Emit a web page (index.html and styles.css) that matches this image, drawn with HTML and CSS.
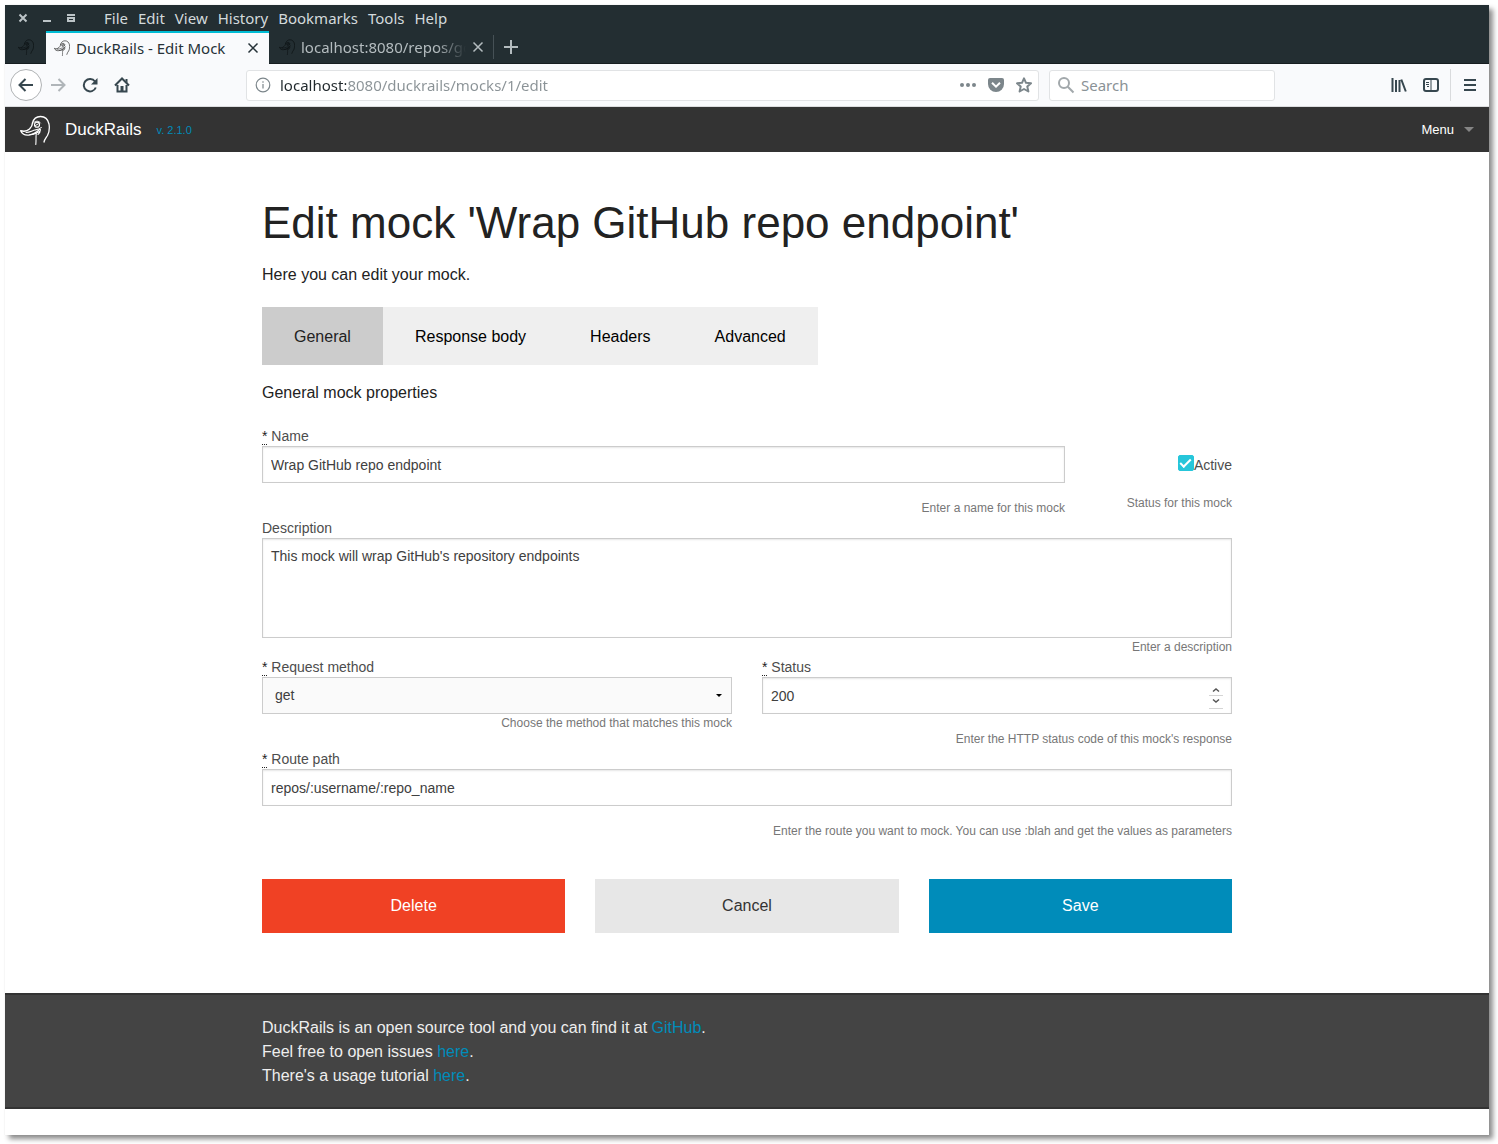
FILE: index.html
```html
<!DOCTYPE html>
<html lang="en">
<head>
<meta charset="utf-8">
<meta name="viewport" content="width=device-width, initial-scale=1">
<title>DuckRails - Edit Mock</title>
<link rel="stylesheet" href="styles.css">
</head>
<body>
<svg class="defs" aria-hidden="true">
  <symbol id="duck" viewBox="0 0 30 30">
    <g fill="none" stroke="currentColor" stroke-linecap="round" stroke-linejoin="round">
      <path stroke-width="1.3" d="M12.500 8C13.500 4 16.500 1.500 20.500 1.500C25 1.500 28 4.500 29 9C29.800 13.500 29 17.500 27.500 20.500C26 23 24.500 24.500 24 27"/>
      <path stroke-width="1.4" d="M12.500 8C12.500 10 11.500 12 9.500 14C6.500 16.800 4 16.700 .7 15.700C2 18.800 5 20.500 9 20C13.500 19.300 16.500 17.500 19.500 14.500"/>
      <path stroke-width="1.1" d="M6 17.500C10 17.500 12.500 15.500 15 15C17.500 14.600 19.500 14.500 21.300 12.500M11 19.500C14 19.500 17 18 19.500 16.500M16.300 18.500C15.700 22 16.300 25 15.800 29.500M20.500 14.500C20.300 17 19.500 18.500 18 19.500"/>
      <circle stroke-width="1.2" cx="17" cy="9.700" r="2.500"/>
      <path stroke-width="1" d="M14 7.500C16 5.500 19 5.800 20.500 8M15.500 10.500L18 9"/>
    </g>
  </symbol>
</svg>
<div class="window">
  <div class="menubar">
    <div class="window-controls">
      <button type="button" aria-label="Close window"><svg width="10" height="10" viewBox="0 0 10 10"><path d="M1.500 1.500L8.500 8.500M8.500 1.500L1.500 8.500"/></svg></button>
      <button type="button" aria-label="Minimize window"><svg width="10" height="10" viewBox="0 0 10 10"><path d="M1 8H9"/></svg></button>
      <button type="button" aria-label="Restore window"><svg width="10" height="10" viewBox="0 0 10 10"><path d="M1 2H9M2 8V5H8V8Z"/></svg></button>
    </div>
    <nav class="menus" aria-label="Application menu">
      <button type="button">File</button><button type="button">Edit</button><button type="button">View</button><button type="button">History</button><button type="button">Bookmarks</button><button type="button">Tools</button><button type="button">Help</button>
    </nav>
  </div>

  <div class="tabstrip">
    <button type="button" class="pinned" aria-label="Pinned tab"><svg class="favicon dim" width="16" height="16"><use href="#duck"/></svg></button>
    <div class="browser-tab current">
      <svg class="favicon" width="16" height="16"><use href="#duck"/></svg>
      <span class="tab-title">DuckRails - Edit Mock</span>
      <button type="button" aria-label="Close tab"><svg width="12" height="12" viewBox="0 0 12 12"><path d="M1.500 1.500L10.500 10.500M10.500 1.500L1.500 10.500"/></svg></button>
    </div>
    <div class="browser-tab">
      <svg class="favicon dim" width="16" height="16"><use href="#duck"/></svg>
      <span class="tab-title faded">localhost:8080/repos/gol</span>
      <button type="button" aria-label="Close tab"><svg width="12" height="12" viewBox="0 0 12 12"><path d="M1.500 1.500L10.500 10.500M10.500 1.500L1.500 10.500"/></svg></button>
    </div>
    <button type="button" class="new-tab" aria-label="New tab"><svg width="14" height="14" viewBox="0 0 14 14"><path d="M7 0V14M0 7H14"/></svg></button>
  </div>

  <div class="toolbar">
    <div class="nav-buttons">
      <button type="button" class="back" aria-label="Back"><svg width="16" height="16" viewBox="0 0 16 16"><path d="M15 8H2M7.500 2L1.500 8L7.500 14"/></svg></button>
      <button type="button" class="forward" aria-label="Forward"><svg width="16" height="16" viewBox="0 0 16 16"><path d="M1 8H14M8.500 2L14.500 8L8.500 14"/></svg></button>
      <button type="button" aria-label="Reload"><svg width="16" height="16" viewBox="0 0 16 16"><path d="M13.800 10.500A6.200 6.200 0 1 1 13 4.500"/><path class="solid" d="M15.500 1V7.500H9Z"/></svg></button>
      <button type="button" aria-label="Home"><svg width="16" height="16" viewBox="0 0 16 16"><path d="M1 8.500L8 1.500L15 8.500M3.500 8V14.500H12.500V8"/><path class="solid" d="M6.500 9H9.500V14H6.500ZM11.500 2H13.500V6L11.500 4Z"/></svg></button>
    </div>
    <div class="field-box address">
      <svg class="info" width="16" height="16" viewBox="0 0 16 16"><circle cx="8" cy="8" r="6.800"/><path d="M8 7V11.500M8 4.200V5.800"/></svg>
      <input class="url" type="text" aria-label="Address" value="localhost:8080/duckrails/mocks/1/edit">
      <button type="button" aria-label="Page actions"><svg width="16" height="16" viewBox="0 0 16 16"><g class="solid"><circle cx="2" cy="8" r="2"/><circle cx="8" cy="8" r="2"/><circle cx="14" cy="8" r="2"/></g></svg></button>
      <button type="button" aria-label="Save to Pocket"><svg width="16" height="16" viewBox="0 0 16 16"><path class="solid" d="M2 1H14Q16 1 16 3V7A8 8 0 0 1 0 7V3Q0 1 2 1Z"/><path class="knockout" d="M4 5.800L8 9.600L12 5.800"/></svg></button>
      <button type="button" aria-label="Bookmark this page"><svg width="16" height="16" viewBox="0 0 16 16"><path stroke-linejoin="round" d="M8 1.300L10 5.800L15 6.300L11.300 9.600L12.400 14.500L8 12L3.600 14.500L4.700 9.600L1 6.300L6 5.800Z"/></svg></button>
    </div>
    <label class="field-box search">
      <svg width="18" height="18" viewBox="0 0 18 18"><circle cx="7" cy="7" r="5"/><path d="M10.800 10.800L16.500 16.500"/></svg>
      <input type="text" aria-label="Search" placeholder="Search">
    </label>
    <div class="tools">
      <button type="button" aria-label="Library"><svg width="16" height="16" viewBox="0 0 16 16"><path d="M1.500 1V15M5 3V15M8.500 3V15M10.300 2.500L14.800 14.500"/></svg></button>
      <button type="button" aria-label="Sidebars"><svg width="16" height="16" viewBox="0 0 16 16"><rect x="1" y="2" width="14" height="12" rx="2"/><path class="thin" d="M8 2V14M3 5.500H6M3 7.500H6M4 9.500H6"/></svg></button>
      <button type="button" class="menu-button" aria-label="Open menu"><svg width="16" height="16" viewBox="0 0 16 16"><path d="M2 3H14M2 8H14M2 13H14"/></svg></button>
    </div>
  </div>

  <header class="topbar">
    <a class="brand" href="#"><svg width="30" height="30"><use href="#duck"/></svg><span>DuckRails</span></a>
    <a class="version" href="#">v. 2.1.0</a>
    <button type="button" class="menu">Menu<span class="caret"></span></button>
  </header>

  <main class="container">
    <h1>Edit mock 'Wrap GitHub repo endpoint'</h1>
    <p>Here you can edit your mock.</p>
    <div class="tabs" role="tablist">
      <button type="button" role="tab" aria-selected="true" class="active">General</button><button type="button" role="tab" aria-selected="false">Response body</button><button type="button" role="tab" aria-selected="false">Headers</button><button type="button" role="tab" aria-selected="false">Advanced</button>
    </div>
    <form>
      <p>General mock properties</p>
      <div class="row name-row">
        <div class="field">
          <label for="name"><abbr title="required">*</abbr> Name</label>
          <input class="control spaced" id="name" type="text" value="Wrap GitHub repo endpoint">
          <span class="hint">Enter a name for this mock</span>
        </div>
        <div class="field status-field">
          <label class="check" for="active"><input id="active" type="checkbox" checked>Active</label>
          <span class="hint">Status for this mock</span>
        </div>
      </div>
      <div class="field">
        <label for="description">Description</label>
        <textarea class="control" id="description">This mock will wrap GitHub's repository endpoints</textarea>
        <span class="hint">Enter a description</span>
      </div>
      <div class="row halves">
        <div class="field">
          <label for="method"><abbr title="required">*</abbr> Request method</label>
          <div class="select-wrap">
            <select class="control" id="method"><option>get</option><option>post</option><option>put</option><option>delete</option></select>
          </div>
          <span class="hint">Choose the method that matches this mock</span>
        </div>
        <div class="field">
          <label for="status"><abbr title="required">*</abbr> Status</label>
          <div class="number-wrap">
            <input class="control spaced" id="status" type="number" value="200">
            <svg class="spinner" width="14" height="24" viewBox="0 0 14 24" aria-hidden="true"><path class="rule" d="M0 10.500H14M0 23.500H14"/><path d="M4 6.500L7 4L10 6.500M4 14.500L7 17L10 14.500"/></svg>
          </div>
          <span class="hint">Enter the HTTP status code of this mock's response</span>
        </div>
      </div>
      <div class="field">
        <label for="route"><abbr title="required">*</abbr> Route path</label>
        <input class="control spaced" id="route" type="text" value="repos/:username/:repo_name">
        <span class="hint">Enter the route you want to mock. You can use :blah and get the values as parameters</span>
      </div>
      <div class="row actions">
        <button type="button" class="alert">Delete</button>
        <button type="button" class="secondary">Cancel</button>
        <button type="submit" class="primary">Save</button>
      </div>
    </form>
  </main>

  <footer>
    <div class="container">
      DuckRails is an open source tool and you can find it at <a href="#">GitHub</a>.<br>
      Feel free to open issues <a href="#">here</a>.<br>
      There's a usage tutorial <a href="#">here</a>.
    </div>
  </footer>
</div>
</body>
</html>
```
FILE: styles.css
```css
*, *::before, *::after { box-sizing: border-box; }

body {
  margin: 0;
  padding: 5px 9px 9px 5px;
  background: #fff;
  color: #222;
  font: 16px/26px "Liberation Sans", Arial, sans-serif;
}

button, input, select, textarea { font: inherit; color: inherit; border-radius: 0; }
button { margin: 0; padding: 0; border: 0; background: none; cursor: pointer; }
a { color: #008cba; text-decoration: none; }
svg { display: block; flex: none; }
.defs { position: absolute; width: 0; height: 0; }

.window {
  display: flex;
  flex-direction: column;
  min-height: calc(100vh - 14px);
  background: #fff;
  box-shadow: 4px 4px 5px rgba(0, 0, 0, .45), 0 0 1px rgba(0, 0, 0, .1);
}

/* Browser chrome */
.menubar, .tabstrip, .toolbar {
  display: flex;
  align-items: center;
  font-family: "Noto Sans", sans-serif;
  font-size: 15px;
  line-height: 20px;
}
.menubar svg, .tabstrip button svg, .toolbar svg { fill: none; stroke: currentColor; stroke-width: 2; }
.toolbar .solid { fill: currentColor; stroke: none; }

.menubar { height: 26px; padding-left: 13px; background: #232e32; color: #d3dadc; }
.window-controls { display: flex; gap: 14px; margin-right: 28px; color: #bcc4c7; }
.menus { display: flex; gap: 10px; }

.tabstrip { height: 33px; background: #232e32; color: #b4bcbf; border-bottom: 1px solid #161d20; }
.pinned { display: flex; justify-content: center; width: 41px; }
.favicon { color: #333; }
.favicon.dim { color: #0c1113; }
.browser-tab { display: flex; align-items: center; gap: 6px; width: 223px; height: 33px; padding: 0 8px 0 10px; }
.browser-tab button svg { stroke-width: 1.5; }
.browser-tab.current { border-top: 2px solid #00bcd4; background: #f9fafc; color: #263238; margin-bottom: -1px; padding: 0 10px 2px 8px; }
.tab-title { flex: 1; overflow: hidden; white-space: nowrap; }
.faded { mask-image: linear-gradient(90deg, #000 82%, transparent); }
.new-tab { height: 24px; margin-left: 1px; padding-left: 10px; border-left: 1px solid #465156; }

.toolbar { height: 43px; padding: 0 11px 0 5px; background: #f9fafc; color: #37474f; border-bottom: 1px solid #dcdddf; }
.nav-buttons { display: flex; align-items: center; gap: 16px; width: 236px; }
.back { display: grid; place-items: center; width: 32px; height: 32px; border: 1px solid #b0b3b5; border-radius: 50%; background: #fff; }
.forward { margin-left: -8px; color: #b0b5b9; }
.field-box { display: flex; align-items: center; height: 31px; border: 1px solid #e1e3e5; border-radius: 3px; background: #fff; color: #7c868b; }
.field-box input { flex: 1; min-width: 0; padding: 0; border: 0; outline: 0; background: none; }
.field-box input::placeholder { color: #8a9296; opacity: 1; }
.address { flex: 1; gap: 12px; padding: 0 6px 0 8px; }
.toolbar .info { stroke-width: 1.2; margin-right: -3px; }
.field-box .url { color: transparent; background: linear-gradient(90deg, #20282c 66px, #8a9296 66px); -webkit-background-clip: text; background-clip: text; }
.toolbar .knockout { stroke: #fff; }
.search { gap: 6px; width: 226px; margin-left: 10px; padding: 0 7px; }
.search svg { color: #a2a8ab; }
.tools { display: flex; align-items: center; gap: 16px; margin-left: 116px; }
.tools .thin { stroke-width: 1; }
.menu-button { display: grid; place-items: center; height: 32px; margin-left: -5px; padding-left: 11px; border-left: 1px solid #d9dbdd; }

/* Application header */
.topbar { display: flex; align-items: center; height: 45px; padding: 0 15px; background: #333; color: #fff; }
.brand { display: flex; align-items: center; gap: 15px; color: #fff; font-size: 17px; }
.version { margin-left: 15px; font-size: 11px; }
.menu { display: flex; align-items: center; gap: 10px; margin-left: auto; font-size: 13px; }
.caret { border: 5px solid transparent; border-top-color: #858585; border-bottom: 0; }

.container { width: 100%; max-width: 1000px; margin: 0 auto; padding: 0 15px; }
main.container { padding-bottom: 60px; }
h1 { margin: 40px 0 8px; font-size: 44px; line-height: 62px; font-weight: 400; }
p { margin: 0 0 19px; }

.tabs { display: flex; }
.tabs button { padding: 17px 32px 15px; background: #efefef; color: #000; }
.tabs .active { background: #ccc; color: #222; }

/* Mock form */
form { padding-top: 15px; }
.row { display: grid; column-gap: 30px; }
.name-row { grid-template-columns: 803fr 137fr; }
.halves { grid-template-columns: 1fr 1fr; }
.actions { grid-template-columns: repeat(3, 1fr); margin-top: 39px; }
.field { display: flex; flex-direction: column; }
.field label { padding-top: 1px; color: #4d4d4d; font-size: 14px; line-height: 20px; }
abbr { border-bottom: 1px dotted #222; color: #222; text-decoration: none; }
.control {
  display: block;
  width: 100%;
  height: 37px;
  margin: 0;
  padding: 8px;
  border: 1px solid #ccc;
  background: #fff;
  box-shadow: inset 0 1px 2px rgba(0, 0, 0, .1);
  color: #404040;
  font-size: 14px;
  line-height: 19px;
  appearance: none;
}
.control.spaced { margin-bottom: 16px; }
textarea.control { height: 100px; resize: vertical; }
textarea::-webkit-resizer { display: none; }
select.control { padding: 8px 12px; background: #fafafa; box-shadow: none; }
.hint { color: #777; font-size: 12px; line-height: 18px; text-align: right; }

.status-field { padding-top: 29px; }
.field .check { display: flex; justify-content: flex-end; margin-bottom: 19px; }
.check input { display: grid; place-items: center; width: 16px; height: 16px; margin: 0; border-radius: 2px; background: #fff; border: 1px solid #26c6da; appearance: none; }
.check input:checked { background: #26c6da; }
.check input:checked::after { content: ""; width: 11px; height: 6px; margin-bottom: 3px; border: solid #fff; border-width: 0 0 2px 2px; rotate: -45deg; }

.select-wrap, .number-wrap { position: relative; }
.select-wrap::after { content: ""; position: absolute; right: 10px; top: 17px; border: 3px solid transparent; border-top-color: #000; border-bottom: 0; pointer-events: none; }
.number-wrap input { appearance: textfield; }
.number-wrap input::-webkit-inner-spin-button { appearance: none; margin: 0; }
.spinner { position: absolute; right: 9px; top: 8px; fill: none; stroke: #555; stroke-width: 1.5; pointer-events: none; }
.spinner .rule { stroke: #d5d5d5; stroke-width: 1; }

.actions button { padding: 14px; }
.alert { background: #f04124; color: #fff; }
.secondary { background: #e7e7e7; color: #333; }
.primary { background: #008cba; color: #fff; }

footer { padding: 21px 0 19px; border: solid #333; border-width: 2px 0; background: #444; color: #eee; line-height: 24px; }
```
